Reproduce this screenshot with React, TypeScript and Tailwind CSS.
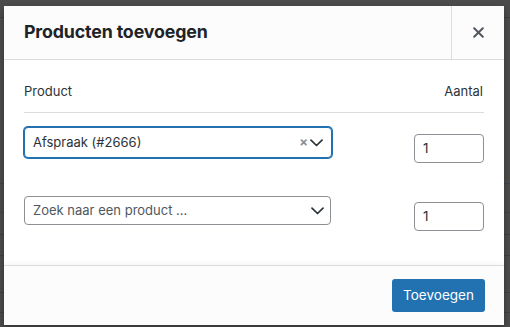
import React from "react";

function Chevron() {
  return (
    <svg width="13" height="8" viewBox="0 0 13 8" className="text-[#2c3338]">
      <path d="M1 1.2l5.5 5.3L12 1.2" fill="none" stroke="currentColor" strokeWidth="1.7" strokeLinecap="round" strokeLinejoin="round" />
    </svg>
  );
}

function QtyInput() {
  return (
    <div className="flex h-[29px] w-[70px] items-center rounded-[4px] border border-[#8c8f94] bg-white px-[8px] text-[13.5px] text-[#2c3338]">
      1
    </div>
  );
}

export default function App() {
  return (
    <div
      className="relative h-[327px] w-[510px] overflow-hidden bg-[#4b4b4b]"
      style={{ fontFamily: "Inter, 'Noto Sans', sans-serif" }}
    >
      {/* page behind the overlay */}
      <div className="flex flex-col">
        <div className="h-[18px] border-b border-[#3f3f3f]" />
        <div className="h-[166px] border-b border-[#3a4550]" />
        <div className="h-[29px] border-b border-[#3a4550]" />
        <div className="h-[22px] border-b border-[#3f3f3f]" />
        <div className="h-[21px] border-b border-[#3f3f3f]" />
        <div className="h-[37px] border-b border-[#3f3f3f]" />
        <div className="h-[20px] border-b border-[#3f3f3f]" />
      </div>

      {/* dialog */}
      <div
        className="absolute left-[4px] top-[6px] flex h-[319px] w-[500px] flex-col bg-white shadow-[0_3px_6px_rgba(0,0,0,0.3)]"
        role="dialog"
      >
        <div className="flex h-[54px] items-stretch border-b border-[#dcdcde] bg-[#fcfcfc]">
          <h1 className="flex flex-1 items-center pl-[20px] text-[17.8px] font-bold tracking-[-0.15px] text-[#1d2327]">
            Producten toevoegen
          </h1>
          <button className="flex w-[53px] items-center justify-center border-l border-[#dcdcde]">
            <svg width="11" height="11" viewBox="0 0 11 11">
              <path d="M1.2 1.2l8.6 8.6M9.8 1.2l-8.6 8.6" stroke="#50575e" strokeWidth="2" strokeLinecap="round" />
            </svg>
          </button>
        </div>

        <div className="flex-1 px-[20px] pt-[22px]">
          <div className="flex h-[31px] items-start justify-between border-b border-[#dcdcde] text-[13px] leading-[18px] text-[#2c3338]">
            <span>Product</span>
            <span className="pr-[1px]">Aantal</span>
          </div>

          <div className="mt-[14px] flex items-start justify-between">
            <div className="flex h-[31px] w-[308px] items-center rounded-[4px] border border-[#2271b1] bg-white pl-[8px] pr-[8px] text-[13px] text-[#2c3338] shadow-[0_0_0_1px_#2271b1]">
              <span className="flex-1">Afspraak (#2666)</span>
              <span className="mr-[2px] text-[13px] font-bold leading-none text-[#8c8f94]">×</span>
              <Chevron />
            </div>
            <div className="mt-[7px]">
              <QtyInput />
            </div>
          </div>

          <div className="mt-[33px] flex items-start justify-between">
            <div className="flex h-[29px] w-[307px] items-center rounded-[4px] border border-[#8c8f94] bg-white pl-[8px] pr-[6px] text-[13px] text-[#50575e]">
              <span className="flex-1">Zoek naar een product ...</span>
              <Chevron />
            </div>
            <div className="mt-[6px]">
              <QtyInput />
            </div>
          </div>
        </div>

        <div className="flex h-[60px] items-center justify-end border-t border-[#dcdcde] bg-[#fcfcfc] pr-[19px] shadow-[0_-2px_4px_rgba(0,0,0,0.04)]">
          <button className="h-[33px] w-[93px] rounded-[3px] bg-[#2271b1] text-[13.5px] text-white">
            Toevoegen
          </button>
        </div>
      </div>
    </div>
  );
}
